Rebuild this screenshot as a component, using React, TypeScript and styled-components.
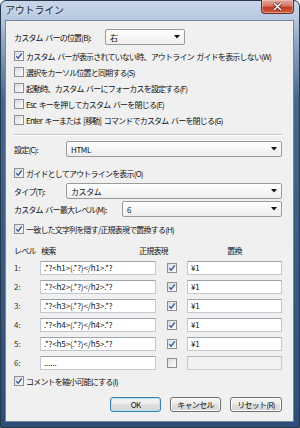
import React from 'react';
import styled, { createGlobalStyle } from 'styled-components';

const GlobalStyle = createGlobalStyle`
  html, body {
    margin: 0;
    padding: 0;
    background: #ffffff;
  }
  body {
    font-family: "Noto Sans CJK JP", "Noto Sans", sans-serif;
    color: #111111;
  }
`;

const Window = styled.div`
  width: 300px;
  height: 428px;
  box-sizing: border-box;
  display: flex;
  flex-direction: column;
  border: 1px solid #27384d;
  border-radius: 6px 6px 0 0;
  padding: 0 5px 5px 4px;
  background: linear-gradient(
    to bottom,
    #c8d7e8 0px,
    #b6c9df 18px,
    #8fa8c6 40px,
    #46668e 100px,
    #2f4e77 100%
  );
`;

const TitleBar = styled.div`
  height: 19px;
  display: flex;
  align-items: flex-start;
  justify-content: space-between;
`;

const Title = styled.span`
  font-size: 10px;
  line-height: 18px;
  letter-spacing: -0.2px;
  color: #1b2838;
  text-shadow: 0 0 5px rgba(255, 255, 255, 0.9);
`;

const CloseButton = styled.div`
  margin-top: -1px;
  width: 33px;
  height: 14px;
  box-sizing: border-box;
  display: flex;
  align-items: center;
  justify-content: center;
  border: 1px solid #6b2a22;
  border-top: none;
  border-radius: 0 0 4px 4px;
  background: linear-gradient(to bottom, #e2a99b 0%, #d47966 45%, #c23b27 55%, #cf5a3f 100%);
  box-shadow: inset 0 0 0 1px rgba(255, 210, 200, 0.5);
`;

const Panel = styled.div`
  flex: 1;
  display: flex;
  flex-direction: column;
  border: 1px solid #7487a0;
  background: #f0f0f0;
  padding: 8px 11px 0 8px;
  font-size: 8px;
  letter-spacing: -0.8px;
  word-spacing: 1.5px;
`;

const FieldRow = styled.div<{ $mt?: number }>`
  display: flex;
  align-items: center;
  height: 16px;
  margin-top: ${(p) => p.$mt ?? 0}px;
`;

const FieldLabel = styled.span<{ $w: number }>`
  width: ${(p) => p.$w}px;
  flex: none;
  white-space: nowrap;
`;

const SelectBox = styled.div<{ $w?: number }>`
  ${(p) => (p.$w ? `width: ${p.$w}px; flex: none;` : 'flex: 1;')}
  height: 16px;
  box-sizing: border-box;
  display: flex;
  align-items: center;
  justify-content: space-between;
  padding: 0 4px 0 4px;
  border: 1px solid #9a9a9a;
  border-radius: 2px;
  background: linear-gradient(to bottom, #ffffff 0%, #f7f7f7 50%, #ededed 100%);
  letter-spacing: -0.4px;
`;

const CheckRow = styled.label<{ $mt?: number }>`
  display: flex;
  align-items: center;
  height: 16px;
  margin-top: ${(p) => p.$mt ?? 0}px;
  white-space: nowrap;
`;

const Box = styled.span`
  width: 10px;
  height: 10px;
  flex: none;
  box-sizing: border-box;
  border: 1px solid #8f8f8f;
  background: linear-gradient(135deg, #d9dcdf 0%, #eef0f2 60%, #fbfbfb 100%);
  display: flex;
  align-items: center;
  justify-content: center;
  margin-right: 2px;
`;

const Separator = styled.div`
  margin-top: 6px;
  height: 1px;
  background: #c8c8c8;
  border-bottom: 1px solid #ffffff;
`;

const HeaderRow = styled.div`
  display: grid;
  grid-template-columns: 27px 98px 48px 95px;
  height: 15px;
  margin-top: 6px;
  align-items: center;
  white-space: nowrap;
`;

const HeaderCell = styled.span<{ $center?: boolean }>`
  text-align: ${(p) => (p.$center ? 'center' : 'left')};
`;

const TableRow = styled.div`
  display: grid;
  grid-template-columns: 26px 116px 31px 95px;
  height: 19px;
  align-items: center;
`;

const LevelLabel = styled.span`
  color: #333333;
  letter-spacing: 0;
`;

const TextBox = styled.div<{ $disabled?: boolean }>`
  height: 14px;
  box-sizing: border-box;
  display: flex;
  align-items: center;
  padding-left: 3px;
  border: 1px solid ${(p) => (p.$disabled ? '#c9cbce' : '#c3c8cf')};
  border-top-color: ${(p) => (p.$disabled ? '#b8babd' : '#9da3ab')};
  background: ${(p) => (p.$disabled ? '#f2f2f2' : '#ffffff')};
  white-space: nowrap;
  overflow: hidden;
  letter-spacing: -0.1px;
`;

const CheckCell = styled.div`
  display: flex;
  justify-content: center;
  padding-left: 2px;
`;

const ButtonBar = styled.div`
  display: flex;
  justify-content: flex-end;
  gap: 9px;
  margin-top: 8px;
`;

const Button = styled.button<{ $default?: boolean; $w?: number }>`
  width: ${(p) => p.$w ?? 51}px;
  height: 15px;
  padding: 0;
  font-family: inherit;
  font-size: 8px;
  letter-spacing: -0.7px;
  color: #111111;
  border-radius: 3px;
  border: 1px solid ${(p) => (p.$default ? '#3c7fb1' : '#707070')};
  background: linear-gradient(to bottom, #f4f4f4 0%, #ececec 50%, #e0e0e0 50%, #d6d6d6 100%);
  box-shadow: ${(p) => (p.$default ? 'inset 0 0 0 1px #b8e0f6' : 'inset 0 0 0 1px #fbfbfb')};
`;

function Check({ checked }: { checked: boolean }) {
  return (
    <Box>
      {checked && (
        <svg width="8" height="8" viewBox="0 0 8 8">
          <path d="M1.3 4.2 L3.2 6.2 L6.8 1.3" fill="none" stroke="#3a5898" strokeWidth="1.4" />
        </svg>
      )}
    </Box>
  );
}

function Arrow() {
  return (
    <svg width="6" height="4" viewBox="0 0 6 4">
      <path d="M0 0 H6 L3 3.5 Z" fill="#111111" />
    </svg>
  );
}

const options = [
  { label: 'カスタム バーが表示されていない時、アウトライン ガイドを表示しない(W)', checked: true },
  { label: '選択をカーソル位置と同期する(S)', checked: false },
  { label: '起動時、カスタム バーにフォーカスを設定する(F)', checked: false },
  { label: 'Esc キーを押してカスタム バーを閉じる(E)', checked: false },
  { label: 'Enter キーまたは [移動] コマンドでカスタム バーを閉じる(G)', checked: false },
];

const levels = [
  { search: '.*?<h1>(.*?)</h1>.*?', regex: true, replace: '¥1' },
  { search: '.*?<h2>(.*?)</h2>.*?', regex: true, replace: '¥1' },
  { search: '.*?<h3>(.*?)</h3>.*?', regex: true, replace: '¥1' },
  { search: '.*?<h4>(.*?)</h4>.*?', regex: true, replace: '¥1' },
  { search: '.*?<h5>(.*?)</h5>.*?', regex: true, replace: '¥1' },
  { search: '......', regex: false, replace: '' },
];

export default function App() {
  return (
    <>
      <GlobalStyle />
      <Window>
        <TitleBar>
          <Title>アウトライン</Title>
          <CloseButton>
            <svg width="11" height="9" viewBox="0 0 11 9">
              <path d="M2 1 L9 8 M9 1 L2 8" stroke="#5a1d14" strokeWidth="3" />
              <path d="M2 1 L9 8 M9 1 L2 8" stroke="#ffffff" strokeWidth="1.6" />
            </svg>
          </CloseButton>
        </TitleBar>
        <Panel>
          <FieldRow>
            <FieldLabel $w={91}>カスタム バーの位置(B):</FieldLabel>
            <SelectBox $w={80}>
              <span>右</span>
              <Arrow />
            </SelectBox>
          </FieldRow>

          {options.map((o, i) => (
            <CheckRow key={o.label} $mt={i === 0 ? 3 : 0}>
              <Check checked={o.checked} />
              {o.label}
            </CheckRow>
          ))}

          <Separator />

          <FieldRow $mt={5}>
            <FieldLabel $w={52}>設定(C):</FieldLabel>
            <SelectBox>
              <span>HTML</span>
              <Arrow />
            </SelectBox>
          </FieldRow>

          <CheckRow $mt={8}>
            <Check checked />
            ガイドとしてアウトラインを表示(O)
          </CheckRow>

          <FieldRow $mt={2}>
            <FieldLabel $w={52}>タイプ(T):</FieldLabel>
            <SelectBox>
              <span>カスタム</span>
              <Arrow />
            </SelectBox>
          </FieldRow>

          <FieldRow $mt={2}>
            <FieldLabel $w={108}>カスタム バー最大レベル(M):</FieldLabel>
            <SelectBox>
              <span>6</span>
              <Arrow />
            </SelectBox>
          </FieldRow>

          <CheckRow $mt={4}>
            <Check checked />
            一致した文字列を隠す/正規表現で置換する(H)
          </CheckRow>

          <HeaderRow>
            <HeaderCell>レベル</HeaderCell>
            <HeaderCell>検索</HeaderCell>
            <HeaderCell>正規表現</HeaderCell>
            <HeaderCell $center>置換</HeaderCell>
          </HeaderRow>

          {levels.map((l, i) => (
            <TableRow key={i}>
              <LevelLabel>{i + 1}:</LevelLabel>
              <TextBox>{l.search}</TextBox>
              <CheckCell>
                <Check checked={l.regex} />
              </CheckCell>
              <TextBox $disabled={!l.regex}>{l.replace}</TextBox>
            </TableRow>
          ))}

          <CheckRow $mt={1}>
            <Check checked />
            コメントを縮小可能にする(I)
          </CheckRow>

          <ButtonBar>
            <Button $default>OK</Button>
            <Button>キャンセル</Button>
            <Button $w={52}>リセット(R)</Button>
          </ButtonBar>
        </Panel>
      </Window>
    </>
  );
}
